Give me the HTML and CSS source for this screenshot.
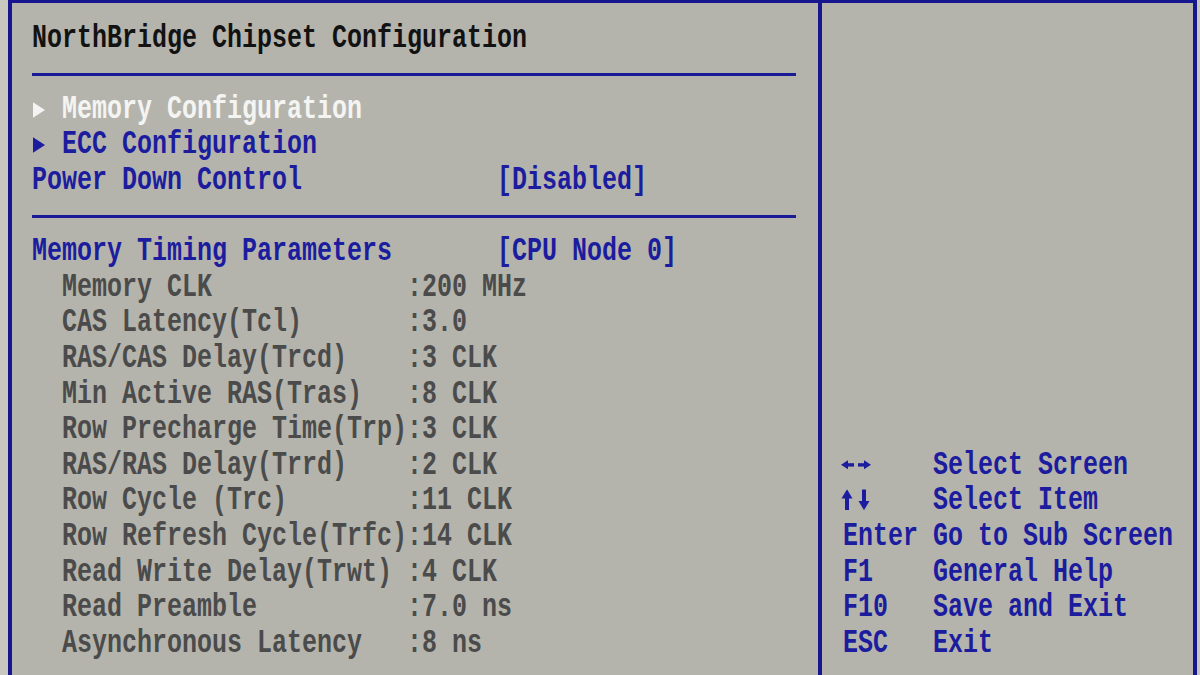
FILE: index.html
```html
<!DOCTYPE html>
<html lang="en">
<head>
    <meta charset="UTF-8">
    <title>NorthBridge Chipset Configuration</title>
    <link rel="stylesheet" href="styles.css">
</head>
<body>
    <div class="screen">
        <!-- Левая панель: настройки -->
        <section class="panel main">
            <div class="row title">NorthBridge Chipset Configuration</div>
            <div class="rule"></div>

            <div class="row item active"><span class="arrow"></span>Memory Configuration</div>
            <div class="row item"><span class="arrow"></span>ECC Configuration</div>
            <div class="row setting"><span>Power Down Control</span><span>[Disabled]</span></div>
            <div class="rule"></div>

            <div class="row setting"><span>Memory Timing Parameters</span><span>[CPU Node 0]</span></div>
            <div class="row info"><span>Memory CLK</span><span>:200 MHz</span></div>
            <div class="row info"><span>CAS Latency(Tcl)</span><span>:3.0</span></div>
            <div class="row info"><span>RAS/CAS Delay(Trcd)</span><span>:3 CLK</span></div>
            <div class="row info"><span>Min Active RAS(Tras)</span><span>:8 CLK</span></div>
            <div class="row info"><span>Row Precharge Time(Trp)</span><span>:3 CLK</span></div>
            <div class="row info"><span>RAS/RAS Delay(Trrd)</span><span>:2 CLK</span></div>
            <div class="row info"><span>Row Cycle (Trc)</span><span>:11 CLK</span></div>
            <div class="row info"><span>Row Refresh Cycle(Trfc)</span><span>:14 CLK</span></div>
            <div class="row info"><span>Read Write Delay(Trwt)</span><span>:4 CLK</span></div>
            <div class="row info"><span>Read Preamble</span><span>:7.0 ns</span></div>
            <div class="row info"><span>Asynchronous Latency</span><span>:8 ns</span></div>
        </section>

        <!-- Правая панель: подсказки по клавишам -->
        <aside class="panel help">
            <div class="row key">
                <span><svg class="sym" viewBox="0 0 30 16" width="30" height="16" aria-label="Left/Right">
                    <polygon points="0,8 7,4.5 7,11.5"/>
                    <rect x="6" y="6.8" width="7" height="2.6"/>
                    <rect x="17" y="6.8" width="7" height="2.6"/>
                    <polygon points="30,8 23,4.5 23,11.5"/>
                </svg></span><span>Select Screen</span>
            </div>
            <div class="row key">
                <span><svg class="sym" viewBox="0 0 30 16" width="30" height="16" aria-label="Up/Down">
                    <polygon points="0.5,7 6,0 11.5,7"/>
                    <rect x="4" y="6" width="4" height="10"/>
                    <rect x="21" y="0" width="4" height="10"/>
                    <polygon points="17.5,9 23,16 28.5,9"/>
                </svg></span><span>Select Item</span>
            </div>
            <div class="row key"><span>Enter</span><span>Go to Sub Screen</span></div>
            <div class="row key"><span>F1</span><span>General Help</span></div>
            <div class="row key"><span>F10</span><span>Save and Exit</span></div>
            <div class="row key"><span>ESC</span><span>Exit</span></div>
        </aside>
    </div>
</body>
</html>
```

FILE: styles.css
```css
body {
    margin: 0;
    background: #c8c8c1;
    font-family: 'Liberation Mono', 'DejaVu Sans Mono', monospace;
    font-size: 25px;
    font-weight: bold;
    color: #1c1c9e;
    overflow: hidden;
}
.screen {
    margin-left: 8px;
    width: 1189px;
    height: 100vh;
    box-sizing: border-box;
    border: 4px solid #16168f;
    border-top-width: 3px;
    border-bottom: none;
    background: #b4b4ac;
    display: grid;
    grid-template-columns: 806px 1fr;
}
.panel {
    padding-top: 17.7px;
}
.main {
    padding-left: 20px;
    padding-right: 22px;
}
.help {
    border-left: 4px solid #16168f;
    padding-left: 21px;
    padding-top: 444.9px;
}
/* Строки текста */
.row {
    height: 35.6px;
    line-height: 35.6px;
    white-space: pre;
    transform: scaleY(1.3);
}
.title {
    color: #121212;
}
.rule {
    height: 3px;
    margin: 16.3px 0;
    background: #1a1a96;
}
.item.active {
    color: #f4f4f2;
}
.arrow {
    display: inline-block;
    width: 0;
    height: 0;
    border-left: 12px solid currentColor;
    border-top: 6px solid transparent;
    border-bottom: 6px solid transparent;
    margin: 0 calc(2ch - 13px) 0 1px;
    vertical-align: 0;
}
.setting {
    display: grid;
    grid-template-columns: 31ch auto;
}
.info {
    display: grid;
    grid-template-columns: 23ch auto;
    padding-left: 2ch;
    color: #4b4b4b;
}
.key {
    display: grid;
    grid-template-columns: 6ch auto;
}
.sym {
    fill: currentColor;
    vertical-align: middle;
    margin-left: -2px;
}
```
